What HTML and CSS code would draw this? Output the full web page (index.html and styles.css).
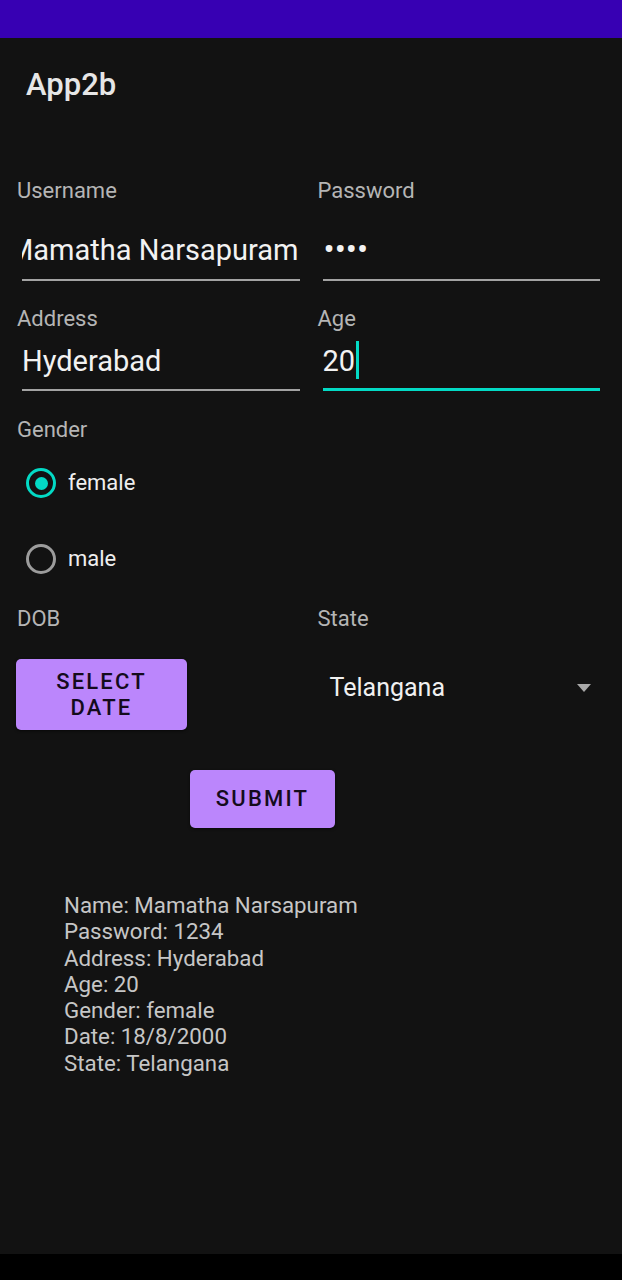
FILE: index.html
```html
<!DOCTYPE html>
<html lang="en">
<head>
<meta charset="utf-8">
<title>App2b</title>
<link rel="stylesheet" href="styles.css">
</head>
<body>
<div class="screen">
  <div class="statusbar"></div>
  <main class="app">
    <header class="appbar">
      <h1 class="title">App2b</h1>
    </header>
    <section class="form">
      <div class="pair pair-first">
        <div class="field">
          <div class="label">Username</div>
          <div class="input input-first"><span class="value">Mamatha Narsapuram</span></div>
        </div>
        <div class="field">
          <div class="label">Password</div>
          <div class="input input-first input-start"><span class="value"><span class="dots">••••</span></span></div>
        </div>
      </div>
      <div class="pair pair-second">
        <div class="field">
          <div class="label">Address</div>
          <div class="input input-start"><span class="value">Hyderabad</span></div>
        </div>
        <div class="field">
          <div class="label">Age</div>
          <div class="input input-start input-focused"><span class="value">20</span><span class="caret"></span></div>
        </div>
      </div>

      <div class="label gender-label">Gender</div>
      <div class="radios">
        <div class="radio">
          <span class="radio-ring checked"><span class="radio-dot"></span></span>
          <span class="radio-text">female</span>
        </div>
        <div class="radio">
          <span class="radio-ring"></span>
          <span class="radio-text">male</span>
        </div>
      </div>

      <div class="pair pair-third">
        <div class="label">DOB</div>
        <div class="label">State</div>
      </div>
      <div class="pair pair-controls">
        <div class="cell">
          <button class="btn btn-date">SELECT DATE</button>
        </div>
        <div class="spinner">
          <span class="spinner-text">Telangana</span>
          <span class="spinner-arrow"></span>
        </div>
      </div>

      <div class="submit-row">
        <button class="btn btn-submit">SUBMIT</button>
      </div>

      <div class="output">
        <div>Name: Mamatha Narsapuram</div>
        <div>Password: 1234</div>
        <div>Address: Hyderabad</div>
        <div>Age: 20</div>
        <div>Gender: female</div>
        <div>Date: 18/8/2000</div>
        <div>State: Telangana</div>
      </div>
    </section>
  </main>
  <div class="navbar"></div>
</div>
</body>
</html>
```
FILE: styles.css
```css
* { box-sizing: border-box; }

html, body {
  margin: 0;
  padding: 0;
  background: #000;
}

body {
  font-family: Roboto, "Noto Sans", "Liberation Sans", sans-serif;
  color: #eeeeee;
}

.screen {
  width: 622px;
  height: 1280px;
  display: flex;
  flex-direction: column;
  overflow: hidden;
}

.statusbar {
  height: 38px;
  background: #3700b3;
  flex-shrink: 0;
}

.app {
  flex: 1;
  background: #121212;
}

.navbar {
  height: 26px;
  background: #000;
  flex-shrink: 0;
}

.appbar {
  height: 93px;
  display: flex;
  align-items: center;
  padding-left: 26px;
}

.title {
  margin: 0;
  font-size: 31px;
  font-weight: 500;
  line-height: 1;
  color: #e6e6e6;
}

.form {
  padding: 0 22px 0 16px;
}

.pair {
  display: grid;
  grid-template-columns: minmax(0, 1fr) minmax(0, 1fr);
  column-gap: 17px;
}

.field {
  min-width: 0;
}

.pair-first { margin-top: 47px; }
.pair-second { margin-top: 25px; }
.pair-third { margin-top: 9px; }
.pair-controls { margin-top: 27px; align-items: start; }

.label {
  font-size: 22px;
  line-height: 26px;
  color: #b5b5b5;
  padding-left: 1px;
}

.input {
  margin-left: 6px;
  margin-top: 9px;
  height: 50px;
  display: flex;
  justify-content: flex-end;
  align-items: flex-start;
  overflow: hidden;
  white-space: nowrap;
  font-size: 29px;
  line-height: 40px;
  color: #f2f2f2;
  border-bottom: 2px solid #a3a3a3;
}

.input-first {
  margin-top: 26px;
  height: 51px;
}

.input-start {
  justify-content: flex-start;
}

.input-focused {
  border-bottom: 3px solid #03dac5;
}

.value {
  flex-shrink: 0;
  padding-right: 1px;
}

.dots {
  font-size: 33px;
  padding-left: 1px;
  letter-spacing: 0;
}

.caret {
  display: inline-block;
  width: 3px;
  height: 39px;
  margin-top: -1px;
  margin-left: 0;
  background: #03dac5;
  flex-shrink: 0;
}

.gender-label {
  margin-top: 26px;
}

.radios {
  margin-top: 2px;
  display: flex;
  flex-direction: column;
}

.radio {
  height: 76px;
  display: flex;
  align-items: center;
  padding-left: 10px;
  gap: 12px;
}

.radio-ring {
  width: 30px;
  height: 30px;
  border-radius: 50%;
  border: 3.5px solid #9c9c9c;
  display: flex;
  align-items: center;
  justify-content: center;
}

.radio-ring.checked {
  border-color: #03dac5;
}

.radio-dot {
  width: 13px;
  height: 13px;
  border-radius: 50%;
  background: #03dac5;
}

.radio-text {
  font-size: 22px;
  line-height: 26px;
  color: #efefef;
}

.btn {
  font-family: Roboto, "Noto Sans", "Liberation Sans", sans-serif;
  font-weight: 500;
  font-size: 22px;
  line-height: 26px;
  letter-spacing: 2.2px;
  color: #140b1c;
  background: #bb86fc;
  border: none;
  border-radius: 5px;
  box-shadow: 0 1px 3px rgba(0, 0, 0, 0.6);
  display: flex;
  align-items: center;
  justify-content: center;
  text-align: center;
}

.btn-date {
  width: 171px;
  height: 71px;
  padding: 0 25px;
}

.spinner {
  height: 58px;
  display: flex;
  align-items: center;
  justify-content: space-between;
  padding: 0 9px 0 13px;
}

.spinner-text {
  font-size: 25px;
  line-height: 30px;
  color: #f0f0f0;
}

.spinner-arrow {
  width: 0;
  height: 0;
  border-left: 7px solid transparent;
  border-right: 7px solid transparent;
  border-top: 8px solid #a8a8a8;
}

.submit-row {
  margin-top: 40px;
  padding-left: 174px;
  display: flex;
}

.btn-submit {
  width: 145px;
  height: 58px;
  padding: 0;
}

.output {
  margin-top: 64px;
  padding-left: 48px;
  font-size: 22.3px;
  line-height: 26.3px;
  color: #c6c6c6;
}
```
